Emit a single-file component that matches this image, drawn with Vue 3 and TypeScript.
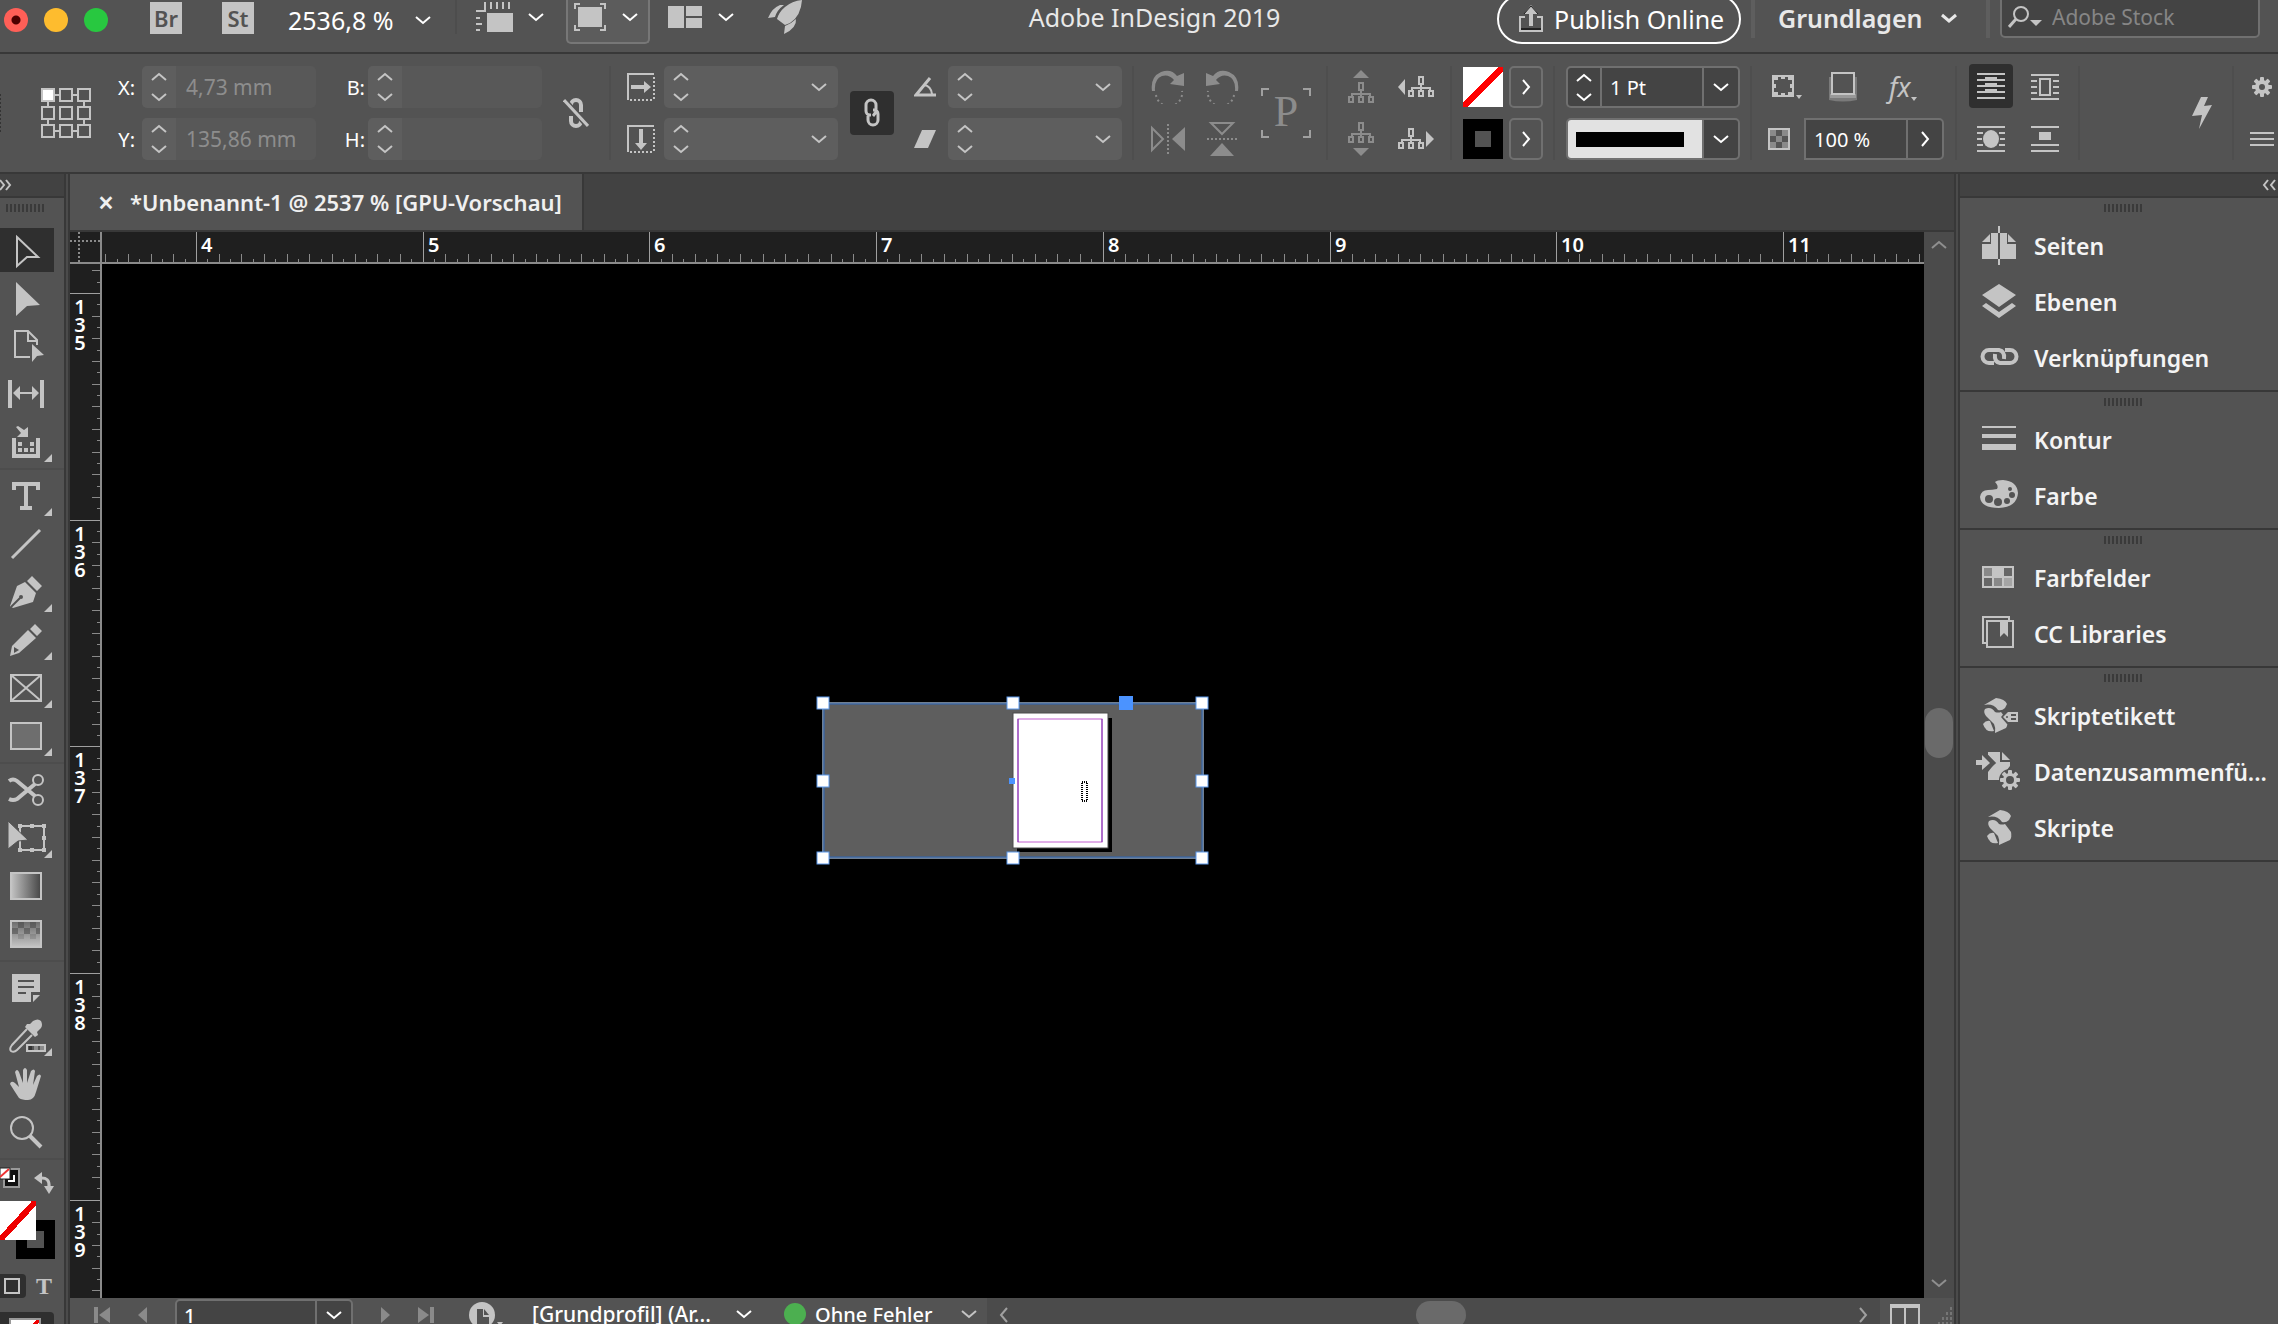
<script setup lang="ts">
import { h, ref } from 'vue'

type Glyph = [number, number, string]

const BG = '#535353'
const treeUp =
  '<g fill="none" stroke="currentColor" stroke-width="2"><rect x="11" y="1" width="4" height="7"/><path d="M13 8v7M4 15v-3h18v3"/><rect x="1" y="15" width="4" height="5"/><rect x="11" y="15" width="4" height="5"/><rect x="21" y="15" width="4" height="5"/></g>'
const scroll = (dx: number): string =>
  `<g transform="translate(${dx} 0)"><path d="M18 17 30 10q9 1 11 6l-2 4q-3 3-7 2-5-7-14-5z"/><path d="M19 21q6-3 10 3 3 1 6 0l6 8q1 5-1 8l-11 5q1-5-1-9l-8-8q-3-4-1-7z"/><path d="M17 36q3-4 7-3l4 10q-8 2-11-7z"/></g>`
const gear = (cx: number, cy: number, r: number, hole: number, bg: string): string => {
  let s = ''
  for (let a = 0; a < 180; a += 45) {
    s += `<rect x="${cx - 2}" y="${cy - r}" width="4" height="${r * 2}" rx="1" transform="rotate(${a} ${cx} ${cy})"/>`
  }
  return s + `<circle cx="${cx}" cy="${cy}" r="${r - 3}"/><circle cx="${cx}" cy="${cy}" r="${hole}" fill="${bg}"/>`
}
const corner = '<path d="M52 36v8h-8z"/>'

const glyphs: Record<string, Glyph> = {
  down: [16, 10, '<path d="M1 2l7 6 7-6" fill="none" stroke="currentColor" stroke-width="2"/>'],
  up: [16, 10, '<path d="M1 8l7-6 7 6" fill="none" stroke="currentColor" stroke-width="2"/>'],
  downBold: [16, 10, '<path d="M1 2l7 6 7-6" fill="none" stroke="currentColor" stroke-width="3"/>'],
  right: [10, 16, '<path d="M2 1l6 7-6 7" fill="none" stroke="currentColor" stroke-width="2"/>'],
  left: [10, 16, '<path d="M8 1l-6 7 6 7" fill="none" stroke="currentColor" stroke-width="2"/>'],
  expand: [12, 12, '<path d="M0 1l4 5-4 5M6 1l4 5-4 5" fill="none" stroke="currentColor" stroke-width="2"/>'],
  collapse: [14, 12, '<path d="M6 1L2 6l4 5M13 1L9 6l4 5" fill="none" stroke="currentColor" stroke-width="2"/>'],
  viewOptions: [38, 30, '<rect x="11" y="11" width="26" height="19"/><path d="M9 0v9H0M15 0v7M21 0v7M27 0v7M33 0v7M0 16h4M0 22h6M0 28h4" fill="none" stroke="currentColor" stroke-width="2"/>'],
  screenMode: [32, 28, '<rect x="4" y="4" width="24" height="20"/><path d="M1 6V1h5M26 1h5v5M31 22v5h-5M6 27H1v-5" fill="none" stroke="currentColor" stroke-width="2"/>'],
  arrange: [34, 22, '<path d="M0 0h16v22H0zM18 0h16v10H18zM18 12h16v10H18z"/>'],
  rocket: [34, 34, '<path d="M34 0q-1 16-12 23l-5 2-8-6q2-7 8-12 7-6 17-7zM12 5Q4 8 0 18l7-1q2-7 9-12zM28 19q1 9-12 15l1-8q6-2 11-7z"/>'],
  share: [24, 28, '<path d="M6 12H1v14h22V12h-5" fill="none" stroke="currentColor" stroke-width="2"/><path d="M2 23h20v2H2z" fill="#222"/><path d="M12 0l7 9h-5v12h-4V9H5z"/><path d="M5 9l7-8 7 8" fill="none" stroke="#222"/>'],
  search: [36, 24, '<circle cx="13" cy="9" r="7" fill="none" stroke="currentColor" stroke-width="2"/><path d="M8 14l-7 8" stroke="currentColor" stroke-width="3"/><path d="M22 15h12l-6 6z"/>'],
  brokenLink: [26, 30, '<path d="M8 12V7a5 5 0 0 1 10 0v7M8 18v5a5 5 0 0 0 10 0v-2" fill="none" stroke="currentColor" stroke-width="4"/><path d="M1 2l24 26" stroke="#535353" stroke-width="6"/><path d="M1 2l24 26" stroke="currentColor" stroke-width="3"/>'],
  linked: [16, 30, '<path d="M7 17H6a4 4 0 0 1-4-4V7a5 5 0 0 1 10 0v5q0 3-3 6M9 12h1a4 4 0 0 1 4 4v6a5 5 0 0 1-10 0v-4" fill="none" stroke="currentColor" stroke-width="3"/>'],
  scaleX: [28, 28, '<path d="M27 1H1v26" fill="none" stroke="currentColor" stroke-width="2"/><path d="M27 4v22M3 27h24" fill="none" stroke="currentColor" stroke-width="2" stroke-dasharray="2 2"/><path d="M4 12h13V8l7 6-7 6v-4H4z"/>'],
  scaleY: [28, 28, '<path d="M27 1H1v26" fill="none" stroke="currentColor" stroke-width="2"/><path d="M27 4v22M3 27h24" fill="none" stroke="currentColor" stroke-width="2" stroke-dasharray="2 2"/><path d="M12 4v14H8l6 7 6-7h-4V4z"/>'],
  angle: [22, 20, '<path d="M16 1L2 18h20" fill="none" stroke="currentColor" stroke-width="3"/><path d="M10 8q7 1 8 9" fill="none" stroke="currentColor" stroke-width="2"/>'],
  shear: [22, 18, '<path d="M8 0h14l-8 18H0z"/>'],
  rotateCw: [34, 34, '<path d="M1 21Q-1 7 10 2q10-4 16 4l7-3v13l-14-2 4-4Q18 4 11 6 3 9 4 21z"/><path d="M5 25A13 13 0 0 0 31 21" fill="none" stroke="currentColor" stroke-width="2" stroke-dasharray="2 3"/>'],
  rotateCcw: [34, 34, '<path d="M33 21Q35 7 24 2 14-2 8 6L1 3v13l14-2-4-4q5-6 12-4 8 3 7 15z"/><path d="M29 25A13 13 0 0 1 3 21" fill="none" stroke="currentColor" stroke-width="2" stroke-dasharray="2 3"/>'],
  flipH: [34, 30, '<path d="M1 4v22l11-11z" fill="none" stroke="currentColor" stroke-width="2"/><path d="M34 3v24L21 15z"/><path d="M17 0v30" stroke="currentColor" stroke-width="2" stroke-dasharray="2 2"/>'],
  flipV: [30, 34, '<path d="M4 1h22L15 12z" fill="none" stroke="currentColor" stroke-width="2"/><path d="M3 34h24L15 21z"/><path d="M0 17h30" stroke="currentColor" stroke-width="2" stroke-dasharray="2 2"/>'],
  parent: [26, 34, '<path d="M5 8l8-8 8 8z"/><g transform="translate(0 12)">' + treeUp + '</g>'],
  child: [26, 34, treeUp + '<path d="M5 26h16l-8 8z"/>'],
  previous: [36, 22, '<path d="M7 3v16L0 11z"/><g transform="translate(10 0)">' + treeUp + '</g>'],
  next: [36, 22, treeUp + '<path d="M28 3v16l8-8z"/>'],
  cornerShape: [30, 24, '<rect x="1" y="1" width="20" height="20" fill="none" stroke="currentColor" stroke-width="2"/><path d="M2 2h4v3H2zM16 2h4v3h-4zM2 17h4v3H2zM16 17h4v3h-4zM9 2h4v2H9zM9 18h4v2H9zM2 9h2v4H2zM18 9h2v4h-2z"/><path d="M24 20h6l-3 4z"/>'],
  shadow: [28, 30, '<path d="M0 5h28v23q-14 3-28 0z" fill="#7a7a7a"/><path d="M1 22h26v4H1z" fill="#999"/><rect x="3" y="1" width="22" height="21" fill="#535353" stroke="currentColor" stroke-width="2"/>'],
  opacity: [22, 22, '<rect x="1" y="1" width="20" height="20" fill="#555" stroke="currentColor" stroke-width="2"/><path d="M2 2h6v6H2zM14 2h6v6h-6zM8 8h6v6H8zM2 14h6v6H2zM14 14h6v6h-6z" fill="#8a8a8a"/>'],
  wrapNone: [28, 26, '<path d="M0 0h28v2H0zM0 24h28v2H0zM0 6h28v2H0zM0 12h28v2H0zM0 18h28v2H0z"/><path d="M8 4h12v4H8zM8 10h12v4H8zM8 16h12v4H8z"/>'],
  wrapBox: [28, 26, '<path d="M0 0h28v2H0zM0 24h28v2H0zM0 6h6v2H0zM0 12h6v2H0zM0 18h6v2H0zM22 6h6v2h-6zM22 12h6v2h-6zM22 18h6v2h-6z"/><rect x="9" y="5" width="10" height="16" fill="none" stroke="currentColor" stroke-width="2"/>'],
  wrapShape: [28, 26, '<path d="M0 0h28v2H0zM0 24h28v2H0zM0 6h6v2H0zM0 12h5v2H0zM0 18h6v2H0zM22 6h6v2h-6zM23 12h5v2h-5zM22 18h6v2h-6z"/><ellipse cx="14" cy="13" rx="8" ry="9"/>'],
  wrapJump: [28, 26, '<path d="M0 0h28v2H0zM0 18h28v2H0zM0 24h28v2H0zM8 6h12v8H8z"/>'],
  bolt: [20, 32, '<path d="M9 0h7l-4 9 8-1L7 32l3-14-10 1z"/>'],
  gear: [20, 20, gear(10, 10, 10, 3, BG)],
  menu: [24, 14, '<path d="M0 0h24v2H0zM0 6h24v2H0zM0 12h24v2H0z"/>'],

  select: [56, 48, '<path d="M17 11l21 20H27L17 40z" fill="none" stroke="currentColor" stroke-width="2"/>'],
  direct: [56, 48, '<path d="M16 8l24 23-13 1-11 10z"/>'],
  page: [56, 48, '<path d="M30 35H15V9h13l9 9v5M28 9v10h9" fill="none" stroke="currentColor" stroke-width="2"/><path d="M32 22l12 11-7 1-5 6z"/>'],
  gap: [56, 48, '<path d="M8 10h4v28H8zM40 10h4v28h-4z"/><path d="M13 23l7-7v6h12v-6l7 7-7 7v-6H20v6z"/>'],
  collector: [56, 48, '<path d="M14 20v18h24V20" fill="none" stroke="currentColor" stroke-width="4"/><path d="M18 24h4v4h-4zM30 24h4v4h-4zM18 30h4v4h-4zM24 30h4v4h-4zM30 30h4v4h-4zM28 9v10H17l4-4-5-6 2-1 6 4z"/>' + corner],
  type: [56, 48, '<path d="M12 10h28v8h-4v-4h-8v20h4v4H20v-4h4V14h-8v4h-4z"/>' + corner],
  line: [56, 48, '<path d="M12 38L40 10" stroke="currentColor" stroke-width="3"/>'],
  pen: [56, 48, '<path d="M32 8l10 10-5 5-10-10zM25 14l11 11-3 9-20 6-3-2 7-20z"/><path d="M11 39l9-9" stroke="#535353" stroke-width="2"/><circle cx="21" cy="29" r="2" fill="#535353"/>' + corner],
  pencil: [56, 48, '<path d="M35 8l7 7-5 5-7-7zM28 14l8 8-17 15-9 3 2-10z"/><path d="M14 31l5 3-5 3z" fill="#535353"/>' + corner],
  frame: [56, 48, '<path d="M11 11h30v26H11zl30 26M41 11L11 37" fill="none" stroke="currentColor" stroke-width="2"/>' + corner],
  rect: [56, 48, '<path d="M11 11h30v26H11z" fill="#6e6e6e" stroke="currentColor" stroke-width="2"/>' + corner],
  scissors: [56, 48, '<path d="M9 15q4-3 8 0l18 15M9 33q4 2 8 0l18-15" fill="none" stroke="currentColor" stroke-width="4"/><circle cx="38" cy="14" r="5" fill="none" stroke="currentColor" stroke-width="2"/><circle cx="38" cy="34" r="5" fill="none" stroke="currentColor" stroke-width="2"/>'],
  transform: [56, 48, '<rect x="20" y="12" width="24" height="24" fill="none" stroke="currentColor" stroke-width="2"/><path d="M18 10h4v4h-4zM30 10h4v4h-4zM42 10h4v4h-4zM42 22h4v4h-4zM18 34h4v4h-4zM30 34h4v4h-4zM42 34h4v4h-4z"/><path d="M8 7l20 19-10 1-10 8z" stroke="#535353"/>' + corner],
  gradient: [56, 48, '<defs><linearGradient id="g1"><stop stop-color="#c4c4c4"/><stop offset="1" stop-color="#454545"/></linearGradient></defs><path d="M11 11h30v26H11z" fill="url(#g1)" stroke="currentColor" stroke-width="2"/>'],
  feather: [56, 48, '<defs><linearGradient id="g2" x2="0" y2="1"><stop stop-color="#6a6a6a"/><stop offset="1" stop-color="#c4c4c4"/></linearGradient></defs><path d="M11 11h30v26H11z" fill="url(#g2)" stroke="currentColor" stroke-width="2"/><path d="M18 12h6v6h-6zM30 12h6v6h-6zM12 18h6v6h-6zM24 18h6v6h-6zM36 18h4v6h-4z" fill="#444" opacity=".5"/><path d="M18 24h6v5h-6zM30 24h6v5h-6z" fill="#444" opacity=".2"/>'],
  note: [56, 48, '<path d="M12 10h28v18h-9v10H12zM33 31h7l-7 7z"/><path d="M18 17h16M18 23h16M18 29h8" stroke="#535353" stroke-width="2"/>'],
  dropper: [56, 48, '<path d="M30 12l3-3q5-3 8 0 2 4 0 7l-4 4 1 3-3 2-10-10 2-3z"/><path d="M27 17L12 33q-3 4-1 6 3 2 6-1l15-15" fill="none" stroke="currentColor" stroke-width="2"/><rect x="27" y="33" width="18" height="6" fill="#535353" stroke="currentColor" stroke-width="2"/><path d="M29 34h3v4h-3z" fill="#333"/><path d="M34 34h4v4h-4zM40 34h4v4h-4z" fill="#8a8a8a"/>' + corner],
  hand: [56, 48, '<path d="M19 38q-4-6-9-14 1-4 5-1l4 4-4-15q2-4 4 0l4 11V10q2-4 4 0v13l4-12q3-3 4 0l-2 14 4-9q3-3 4 0l-5 16q-2 8-8 8-6 0-9-2z"/>'],
  zoom: [56, 48, '<circle cx="22" cy="20" r="11" fill="none" stroke="currentColor" stroke-width="2"/><path d="M30 28l11 11" stroke="currentColor" stroke-width="4"/>'],
  defaults: [20, 24, '<path d="M4 4h15v18H4z" fill="#111" stroke="#999" stroke-width="2"/><path d="M8 16h6v-6" stroke="#fff" stroke-width="2" fill="none"/><path d="M0 3h10v11H0z" fill="#fff" stroke="#222" stroke-width="1"/><path d="M0 12l9-8" stroke="#e33" stroke-width="2"/>'],
  swap: [20, 22, '<path d="M6 6q10-1 9 9" fill="none" stroke="currentColor" stroke-width="3"/><path d="M0 6l8-6v12zM10 14h10l-5 8z"/>'],

  seiten: [64, 56, '<path d="M12 26h34v15H12zM21 15h7v12h-7zM30 15h7v12h-7zM12 24l8-8v8zM46 24l-8-8v8z"/><path d="M29 8v38" stroke="#535353" stroke-width="2"/><path d="M28 8h2v7h-2zM28 41h2v6h-2z"/>'],
  ebenen: [64, 56, '<path d="M29 10l17 11-17 12-17-12zM12 32l4-3 13 9 13-9 4 3-17 12z"/>'],
  links: [64, 56, '<path d="M24 33h-5a6 6 0 0 1 0-13h10q6 1 5 9M35 20h5a6 6 0 0 1 0 13H30q-6-1-5-9" fill="none" stroke="currentColor" stroke-width="4"/>'],
  kontur: [64, 56, '<path d="M12 14h34v2H12zM12 22h34v4H12zM12 32h34v6H12z"/>'],
  farbe: [64, 56, '<path d="M25 14q2-2 8-2 14 1 15 13-1 14-19 15-18 0-19-11 1-7 8-7 4 0 9-1 2-3-2-7z"/><g fill="#535353"><circle cx="19" cy="31" r="4"/><circle cx="28" cy="34" r="4"/><circle cx="37" cy="33" r="3"/><circle cx="42" cy="27" r="3"/><circle cx="40" cy="21" r="2"/></g>'],
  farbfelder: [64, 56, '<path d="M12 16h32v22H12z"/><path d="M14 18h8v8h-8z" fill="#888"/><path d="M34 18h8v8h-8zM14 28h8v8h-8z" fill="#666"/><path d="M24 28h8v8h-8z" fill="#888"/><path d="M34 28h8v8h-8z" fill="#a5a5a5"/>'],
  libraries: [64, 56, '<path d="M16 37h-3V11h26v3" fill="none" stroke="currentColor" stroke-width="2"/><rect x="17" y="15" width="26" height="26" fill="none" stroke="currentColor" stroke-width="2"/><path d="M30 15h8v16l-4-4-4 4z"/>'],
  etikett: [64, 56, scroll(-4) + '<path d="M31 29l6-7h13v14H37z" fill="#535353"/><path d="M33 29l5-5h10v10H38z"/><path d="M41 27h5M41 31h5" stroke="#535353" stroke-width="2"/><circle cx="37" cy="29" r="1" fill="#535353"/>'],
  daten: [64, 56, '<path d="M18 8h12v10h10v4L29 36H18v-8l7-9-7-8zM32 8l8 8h-8z"/><path d="M14 9l10 10-10 9" fill="none" stroke="#535353" stroke-width="3"/><path d="M6 16h6v-5l8 8-8 7v-5H6z"/><circle cx="40" cy="36" r="11" fill="#535353"/>' + gear(40, 36, 10, 4, BG)],
  skripte: [64, 56, scroll(0)],

  first: [16, 16, '<path d="M0 0h4v16H0zM16 0v16L5 8z"/>'],
  prev: [9, 16, '<path d="M9 0v16L0 8z"/>'],
  nextPage: [9, 16, '<path d="M0 0v16l9-8z"/>'],
  last: [16, 16, '<path d="M16 0h-4v16h4zM0 0v16l11-8z"/>'],
  preflight: [36, 26, '<circle cx="13" cy="13" r="13"/><path d="M8 7h6v8h6v11H8z" fill="#535353"/><path d="M15 7l5 6h-5z" fill="#535353"/><path d="M28 20h6l-3 4z"/>'],
  split: [30, 24, '<path d="M0 0h30v24h-2V4H16v20h-2V4H2v20H0z"/>'],
  sizer: [16, 18, '<path d="M14 0h2v3h-2zM14 5h2v3h-2zM10 5h2v3h-2zM14 10h2v3h-2zM10 10h2v3h-2zM6 10h2v3H6zM14 15h2v3h-2zM10 15h2v3h-2zM6 15h2v3H6zM2 15h2v3H2z"/>'],
}

const Ic = (props: { n: string }) => {
  const [w, hh, body] = glyphs[props.n]
  return h('svg', {
    width: w,
    height: hh,
    viewBox: `0 0 ${w} ${hh}`,
    fill: 'currentColor',
    'aria-hidden': 'true',
    innerHTML: body,
  })
}
Ic.props = ['n']

const toolGroups: string[][] = [
  ['select', 'direct', 'page', 'gap', 'collector'],
  ['type', 'line', 'pen', 'pencil', 'frame', 'rect'],
  ['scissors', 'transform', 'gradient', 'feather'],
  ['note', 'dropper', 'hand', 'zoom'],
]
const activeTool = ref('select')

const panels: { icon: string; label: string }[][] = [
  [
    { icon: 'seiten', label: 'Seiten' },
    { icon: 'ebenen', label: 'Ebenen' },
    { icon: 'links', label: 'Verknüpfungen' },
  ],
  [
    { icon: 'kontur', label: 'Kontur' },
    { icon: 'farbe', label: 'Farbe' },
  ],
  [
    { icon: 'farbfelder', label: 'Farbfelder' },
    { icon: 'libraries', label: 'CC Libraries' },
  ],
  [
    { icon: 'etikett', label: 'Skriptetikett' },
    { icon: 'daten', label: 'Datenzusammenfü...' },
    { icon: 'skripte', label: 'Skripte' },
  ],
]

const UNIT = 226.7
function ticks(origin: number, from: number, to: number) {
  const out: { p: number; len: number }[] = []
  for (let i = -20; i < 180; i++) {
    const p = Math.round(origin + (i * UNIT) / 20)
    if (i % 20 !== 0 && p >= from && p < to) out.push({ p, len: i % 2 === 0 ? 8 : 3 })
  }
  return out
}
const hTicks = ticks(94, 0, 1822)
const hMajors = [4, 5, 6, 7, 8, 9, 10, 11].map((n, i) => ({ n, p: Math.round(94 + i * UNIT) }))
const vTicks = ticks(29, 0, 1032)
const vMajors = [135, 136, 137, 138, 139].map((n, i) => ({
  digits: String(n).split(''),
  p: Math.round(29 + i * UNIT),
}))

const handles: [number, number][] = [
  [7, 9], [197, 9], [386, 9], [7, 87], [386, 87], [7, 164], [197, 164], [386, 164],
]
</script>

<template>
  <div class="app">
    <header class="topbar">
      <div class="lights">
        <button class="light close" aria-label="Schließen"></button>
        <button class="light min" aria-label="Minimieren"></button>
        <button class="light max" aria-label="Maximieren"></button>
      </div>
      <button class="badge br">Br</button>
      <button class="badge st">St</button>
      <button class="zoomlevel"><span>2536,8 %</span><Ic n="down" /></button>
      <i class="tsep"></i>
      <button class="tbtn viewopts" aria-label="Anzeigeoptionen"><Ic n="viewOptions" class="soft" /><Ic n="down" /></button>
      <button class="tbtn mode" aria-label="Bildschirmmodus"><Ic n="screenMode" class="soft" /><Ic n="down" /></button>
      <button class="tbtn arr" aria-label="Dokumente anordnen"><Ic n="arrange" class="soft" /><Ic n="down" /></button>
      <button class="tbtn rocket" aria-label="GPU"><Ic n="rocket" class="soft" /></button>
      <h1 class="title">Adobe InDesign 2019</h1>
      <button class="publish"><Ic n="share" class="soft" />Publish Online</button>
      <i class="bigsep"></i>
      <button class="workspace">Grundlagen<Ic n="downBold" /></button>
      <i class="bigsep"></i>
      <label class="stock"><Ic n="search" class="soft" /><input type="text" placeholder="Adobe Stock" aria-label="Adobe Stock" /></label>
    </header>

    <section class="control">
      <i class="edge"></i>
      <div class="refpoint">
        <button v-for="n in 9" :key="n" :class="{ on: n === 1 }" :aria-label="'Bezugspunkt ' + n"></button>
      </div>
      <div class="col xy">
        <div v-for="f in [['X', '4,73 mm'], ['Y', '135,86 mm']]" :key="f[0]" class="row">
          <label :for="'f' + f[0]">{{ f[0] }}:</label>
          <div class="field off">
            <span class="step"><button aria-label="Mehr"><Ic n="up" /></button><button aria-label="Weniger"><Ic n="down" /></button></span>
            <input :id="'f' + f[0]" type="text" :value="f[1]" disabled />
          </div>
        </div>
      </div>
      <div class="col bh">
        <div v-for="f in ['B', 'H']" :key="f" class="row">
          <label :for="'f' + f">{{ f }}:</label>
          <div class="field off">
            <span class="step"><button aria-label="Mehr"><Ic n="up" /></button><button aria-label="Weniger"><Ic n="down" /></button></span>
            <input :id="'f' + f" type="text" disabled />
          </div>
        </div>
      </div>
      <button class="bare chain" aria-label="Proportionen"><Ic n="brokenLink" /></button>
      <i class="sep s1"></i>
      <div class="col scale">
        <div v-for="f in ['scaleX', 'scaleY']" :key="f" class="row">
          <Ic :n="f" />
          <div class="field combo">
            <span class="step"><button aria-label="Mehr"><Ic n="up" /></button><button aria-label="Weniger"><Ic n="down" /></button></span>
            <input type="text" :aria-label="f" /><button class="drop" aria-label="Auswahl"><Ic n="down" /></button>
          </div>
        </div>
      </div>
      <button class="linkbtn" aria-label="Verknüpft"><Ic n="linked" /></button>
      <div class="col skew">
        <div v-for="f in ['angle', 'shear']" :key="f" class="row">
          <Ic :n="f" />
          <div class="field combo">
            <span class="step"><button aria-label="Mehr"><Ic n="up" /></button><button aria-label="Weniger"><Ic n="down" /></button></span>
            <input type="text" :aria-label="f" /><button class="drop" aria-label="Auswahl"><Ic n="down" /></button>
          </div>
        </div>
      </div>
      <i class="sep s2"></i>
      <div class="icons rot">
        <button v-for="n in ['rotateCw', 'rotateCcw', 'flipH', 'flipV']" :key="n" :aria-label="n"><Ic :n="n" /></button>
      </div>
      <div class="pbox"><i></i><i></i><i></i><i></i><span>P</span></div>
      <i class="sep s3"></i>
      <div class="icons trees">
        <button class="dim" aria-label="Container"><Ic n="parent" /></button>
        <button aria-label="Vorheriges"><Ic n="previous" /></button>
        <button class="dim" aria-label="Inhalt"><Ic n="child" /></button>
        <button aria-label="Nächstes"><Ic n="next" /></button>
      </div>
      <i class="sep s4"></i>
      <div class="col paint">
        <div class="row"><span class="swatch none"></span><button class="open" aria-label="Fläche"><Ic n="right" /></button></div>
        <div class="row"><span class="swatch black"></span><button class="open" aria-label="Kontur"><Ic n="right" /></button></div>
      </div>
      <i class="sep s5"></i>
      <div class="col stroke">
        <div class="field live">
          <span class="step"><button aria-label="Mehr"><Ic n="up" /></button><button aria-label="Weniger"><Ic n="down" /></button></span>
          <input type="text" value="1 Pt" aria-label="Konturstärke" /><button class="drop" aria-label="Auswahl"><Ic n="down" /></button>
        </div>
        <div class="field live">
          <span class="sample"><i></i></span><button class="drop" aria-label="Konturart"><Ic n="down" /></button>
        </div>
      </div>
      <i class="sep s6"></i>
      <div class="col fx">
        <div class="row trio">
          <button class="bare" aria-label="Ecken"><Ic n="cornerShape" /></button>
          <button class="bare" aria-label="Schatten"><Ic n="shadow" /></button>
          <button class="bare fxt" aria-label="Effekte"><em>fx</em><i></i></button>
        </div>
        <div class="row opa">
          <Ic n="opacity" />
          <div class="field live pct"><input type="text" value="100 %" aria-label="Deckkraft" /><button class="drop" aria-label="Regler"><Ic n="right" /></button></div>
        </div>
      </div>
      <i class="sep s7"></i>
      <div class="icons wrap">
        <button class="on" aria-label="Kein Umfließen"><Ic n="wrapNone" /></button>
        <button aria-label="Rahmen umfließen"><Ic n="wrapBox" /></button>
        <button aria-label="Form umfließen"><Ic n="wrapShape" /></button>
        <button aria-label="Objekt überspringen"><Ic n="wrapJump" /></button>
      </div>
      <i class="sep s7"></i>
      <button class="bare bolt" aria-label="Schnellanwendung"><Ic n="bolt" /></button>
      <i class="sep s8"></i>
      <div class="icons end">
        <button aria-label="Einstellungen"><Ic n="gear" /></button>
        <button aria-label="Menü"><Ic n="menu" /></button>
      </div>
    </section>

    <main class="body">
      <aside class="tools">
        <div class="dockhead"><Ic n="expand" /></div>
        <div class="grip"></div>
        <div v-for="(g, gi) in toolGroups" :key="gi" class="tgroup">
          <button v-for="t in g" :key="t" :class="['tool', { on: t === activeTool }]" :aria-label="t" @click="activeTool = t">
            <Ic :n="t" />
          </button>
        </div>
        <div class="swaprow"><Ic n="defaults" /><Ic n="swap" /></div>
        <div class="fillstroke"><span class="strokebox"></span><span class="fillbox"></span></div>
        <div class="format"><button class="on" aria-label="Container"><i></i></button><button class="t">T</button></div>
        <div class="applybox"><span></span></div>
      </aside>
      <i class="gutter"></i>

      <section class="doc">
        <nav class="tabs">
          <div class="tab"><button class="x" aria-label="Schließen">×</button><span>*Unbenannt-1 @ 2537 % [GPU-Vorschau]</span></div>
        </nav>
        <div class="work">
          <div class="sheet">
            <div class="hrow">
              <div class="origin"></div>
              <svg class="hruler" height="30">
                <rect v-for="t in hTicks" :key="t.p" :x="t.p" :y="30 - t.len" width="1" :height="t.len" fill="#8a8a8a" />
                <template v-for="m in hMajors" :key="m.n">
                  <rect :x="m.p" y="0" width="1" height="30" fill="#a0a0a0" />
                  <text :x="m.p + 5" y="20">{{ m.n }}</text>
                </template>
              </svg>
            </div>
            <div class="vrow">
              <svg class="vruler" width="30">
                <rect v-for="t in vTicks" :key="t.p" :x="30 - t.len" :y="t.p" :width="t.len" height="1" fill="#8a8a8a" />
                <template v-for="m in vMajors" :key="m.p">
                  <rect x="0" :y="m.p" width="30" height="1" fill="#a0a0a0" />
                  <text v-for="(d, di) in m.digits" :key="di" x="10" text-anchor="middle" :y="m.p + 21 + di * 18">{{ d }}</text>
                </template>
              </svg>
              <div class="canvas">
                <svg class="art" width="396" height="172">
                  <rect x="7" y="9" width="380" height="155" fill="#5e5e5e" stroke="#6f7f92" stroke-width="2" />
                  <rect x="8" y="10" width="378" height="153" fill="none" stroke="#2f66b5" />
                  <rect x="201" y="24" width="95" height="134" fill="#000" />
                  <rect x="197" y="19" width="95" height="135" fill="#fff" stroke="#4a4a4a" />
                  <rect x="202" y="25" width="84" height="123" fill="none" stroke="#c25fd0" />
                  <path d="M202 25v123M286 25v123" stroke="#7d2fae" />
                  <rect x="193" y="84" width="6" height="6" fill="#4b93ff" />
                  <rect x="266" y="88" width="5" height="19" fill="none" stroke="#000" stroke-width="2" stroke-dasharray="1 1" />
                  <rect v-for="(p, i) in handles" :key="i" :x="p[0] - 6" :y="p[1] - 6" width="12" height="12" fill="#fff" stroke="#5b97ea" />
                  <rect x="303" y="2" width="14" height="14" fill="#4b93ff" />
                </svg>
              </div>
            </div>
          </div>
          <div class="vscroll"><Ic n="up" /><i></i><Ic n="down" /></div>
        </div>
        <footer class="status">
          <div class="pager">
            <Ic n="first" /><Ic n="prev" class="p1" />
            <div class="pagebox"><input type="text" value="1" aria-label="Seite" /><button aria-label="Seiten"><Ic n="down" /></button></div>
            <Ic n="nextPage" class="p2" /><Ic n="last" class="p3" />
          </div>
          <Ic n="preflight" class="soft pf" />
          <button class="profile"><span>[Grundprofil] (Ar...</span><Ic n="down" /></button>
          <button class="errors"><i></i><span>Ohne Fehler</span><Ic n="down" class="soft" /></button>
          <div class="hscroll"><Ic n="left" /><i></i><Ic n="right" /></div>
          <Ic n="split" class="soft sp" />
          <Ic n="sizer" class="sz" />
        </footer>
      </section>
      <i class="gutter"></i>

      <aside class="dock">
        <div class="dockhead right"><Ic n="collapse" /></div>
        <div v-for="(g, gi) in panels" :key="gi" class="pgroup">
          <div class="grip"></div>
          <button v-for="p in g" :key="p.label" class="panel"><Ic :n="p.icon" /><span>{{ p.label }}</span></button>
        </div>
      </aside>
    </main>
  </div>
</template>

<style>
html,
body,
#app {
  height: 100%;
  overflow: hidden;
}
</style>

<style scoped>
* {
  box-sizing: border-box;
}
.app {
  height: 100vh;
  display: flex;
  flex-direction: column;
  background: #535353;
  color: #fff;
  font-family: 'Noto Sans', 'Open Sans', sans-serif;
  font-size: 20px;
  overflow: hidden;
}
button {
  padding: 0;
  border: 0;
  background: none;
  color: inherit;
  font: inherit;
  display: flex;
  align-items: center;
  flex: none;
}
input {
  border: 0;
  padding: 0;
  min-width: 0;
  background: none;
  color: inherit;
  font: inherit;
  outline: none;
}
svg {
  display: block;
  flex: none;
}
i {
  display: block;
  flex: none;
}
.soft {
  color: #c4c4c4;
}

.topbar {
  flex: 0 0 54px;
  height: 54px;
  display: flex;
  align-items: flex-start;
  border-bottom: 2px solid #383838;
  overflow: hidden;
}
.lights {
  display: flex;
  gap: 16px;
  padding: 8px 0 0 4px;
}
.light {
  width: 24px;
  height: 24px;
  border-radius: 50%;
  justify-content: center;
}
.close {
  background: radial-gradient(circle, #4d0000 4px, #ff5f57 5px);
}
.min {
  background: #febc2e;
}
.max {
  background: #28c840;
}
.badge {
  width: 32px;
  height: 32px;
  margin: 2px 0 0 40px;
  background: #c4c4c4;
  color: #535353;
  font-weight: 600;
  font-size: 22px;
  justify-content: center;
}
.br {
  margin-left: 42px;
}
.zoomlevel {
  margin-left: 34px;
  height: 40px;
  font-size: 25px;
  width: 143px;
  justify-content: space-between;
  white-space: nowrap;
}
.tsep {
  width: 2px;
  height: 34px;
  margin-left: 24px;
  background: #4d4d4d;
}
.tbtn {
  height: 34px;
}
.viewopts {
  margin-left: 19px;
  gap: 14px;
}
.mode {
  margin-left: 22px;
  width: 84px;
  height: 44px;
  padding: 0 10px 8px 6px;
  justify-content: space-between;
  background: #5c5c5c;
  border: 2px solid #777;
  border-top: 0;
  border-radius: 0 0 5px 5px;
}
.arr {
  margin-left: 18px;
  gap: 16px;
}
.rocket {
  margin-left: 34px;
}
.title {
  margin: 0 auto;
  padding-left: 10px;
  font-size: 25px;
  font-weight: 400;
  line-height: 34px;
  color: #e8e8e8;
}
.publish {
  height: 50px;
  width: 244px;
  margin-top: -6px;
  border: 2px solid #fff;
  border-radius: 25px;
  padding-left: 20px;
  gap: 11px;
  font-size: 25px;
  white-space: nowrap;
}
.bigsep {
  width: 4px;
  height: 38px;
  margin-left: 10px;
  background: #5e5e5e;
}
.workspace {
  margin-left: 23px;
  width: 179px;
  height: 35px;
  justify-content: space-between;
  font-size: 25px;
  font-weight: 600;
  color: #e8e8e8;
}
.workspace + .bigsep {
  margin-left: 29px;
}
.stock {
  width: 260px;
  height: 42px;
  margin: -4px 18px 0 10px;
  border: 2px solid #707070;
  border-radius: 5px;
  background: #444;
  display: flex;
  align-items: center;
  padding-left: 6px;
  gap: 8px;
  font-size: 21px;
}
.stock input {
  flex: 1;
}
.stock input::placeholder {
  color: #868686;
  opacity: 1;
}

.control {
  flex: 0 0 120px;
  height: 120px;
  display: flex;
  align-items: center;
  border-bottom: 2px solid #383838;
  color: #c4c4c4;
}
.edge {
  width: 1px;
  height: 38px;
  background: repeating-linear-gradient(#333 0 2px, transparent 2px 4px);
}
.refpoint {
  margin-left: 40px;
  display: grid;
  grid-template-columns: repeat(3, 14px);
  gap: 4px;
  background:
    linear-gradient(#c4c4c4 0 0) 50% 6px / 40px 2px no-repeat,
    linear-gradient(#c4c4c4 0 0) 50% 42px / 40px 2px no-repeat,
    linear-gradient(#c4c4c4 0 0) 6px 50% / 2px 40px no-repeat,
    linear-gradient(#c4c4c4 0 0) 42px 50% / 2px 40px no-repeat;
}
.refpoint button {
  width: 14px;
  height: 14px;
  border: 2px solid #c4c4c4;
  background: #535353;
}
.refpoint .on {
  background: #fff;
}
.col {
  display: flex;
  flex-direction: column;
  gap: 10px;
  flex: none;
}
.row {
  display: flex;
  align-items: center;
  height: 42px;
}
.row label {
  width: 27px;
  color: #fff;
  text-align: right;
  padding-right: 7px;
}
.xy {
  margin-left: 24px;
}
.bh {
  margin-left: 20px;
}
.bh label {
  width: 32px;
  padding-right: 3px;
}
.field {
  width: 174px;
  height: 42px;
  border-radius: 5px;
  display: flex;
  align-items: stretch;
  overflow: hidden;
  background: #5e5e5e;
}
.field input {
  flex: 1;
  width: 0;
  padding-left: 10px;
}
.off {
  background: #585858;
  color: #8d8d8d;
  font-size: 21px;
}
.off .step {
  background: #5e5e5e;
}
.step {
  width: 34px;
  flex: none;
  display: flex;
  flex-direction: column;
  align-items: center;
  color: #c4c4c4;
  padding: 1px 0;
}
.step button {
  flex: 1;
}
.drop {
  width: 38px;
  justify-content: center;
}
.live {
  background: #444;
  border: 2px solid #707070;
  color: #fff;
}
.live .step {
  color: #fff;
  border-right: 2px solid #707070;
  padding: 0;
}
.live input {
  padding-left: 8px;
}
.live .drop {
  width: 36px;
  border-left: 2px solid #707070;
}
.chain {
  margin-left: 21px;
}
.sep {
  width: 2px;
  height: 94px;
  background: #4e4e4e;
}
.s1 {
  margin-left: 20px;
}
.scale {
  margin-left: 16px;
}
.scale .row {
  gap: 9px;
}
.linkbtn {
  width: 44px;
  height: 44px;
  margin-left: 12px;
  border-radius: 4px;
  background: #2f2f2f;
  justify-content: center;
}
.skew {
  margin-left: 20px;
}
.skew .row {
  gap: 12px;
}
.s2 {
  margin-left: 10px;
}
.icons {
  display: grid;
  flex: none;
  grid-template-rows: 42px 42px;
  row-gap: 10px;
}
.icons button {
  justify-content: center;
}
.rot {
  grid-template-columns: 34px 34px;
  column-gap: 20px;
  margin-left: 17px;
  color: #8c8c8c;
}
.pbox {
  position: relative;
  width: 50px;
  height: 50px;
  margin-left: 22px;
  color: #8c8c8c;
  font: 44px/48px 'Liberation Serif', serif;
  text-align: center;
}
.pbox i {
  position: absolute;
  width: 8px;
  height: 8px;
  border: 2px solid #a0a0a0;
}
.pbox i:nth-child(1) {
  left: 0;
  top: 0;
  border-width: 2px 0 0 2px;
}
.pbox i:nth-child(2) {
  right: 0;
  top: 0;
  border-width: 2px 2px 0 0;
}
.pbox i:nth-child(3) {
  left: 0;
  bottom: 0;
  border-width: 0 0 2px 2px;
}
.pbox i:nth-child(4) {
  right: 0;
  bottom: 0;
  border-width: 0 2px 2px 0;
}
.s3 {
  margin-left: 15px;
}
.trees {
  grid-template-columns: 26px 36px;
  column-gap: 24px;
  margin-left: 20px;
}
.dim {
  color: #8c8c8c;
}
.s4 {
  margin-left: 16px;
}
.paint {
  margin-left: 11px;
}
.paint .row {
  gap: 6px;
}
.swatch {
  width: 40px;
  height: 40px;
}
.none {
  background: linear-gradient(to bottom right, #fff calc(50% - 3px), #f00 calc(50% - 3px), #f00 calc(50% + 3px), #fff calc(50% + 3px));
}
.black {
  border: 12px solid #000;
}
.open {
  width: 34px;
  height: 42px;
  justify-content: center;
  border: 2px solid #707070;
  border-radius: 5px;
  color: #fff;
}
.s5 {
  margin-left: 10px;
}
.stroke {
  margin-left: 11px;
}
.sample {
  flex: 1;
  background: #e2e2e2;
  display: flex;
  align-items: center;
  padding: 0 18px 0 8px;
}
.sample i {
  flex: 1;
  height: 15px;
  background: #000;
}
.s6 {
  margin-left: 10px;
}
.fx {
  margin-left: 16px;
  width: 176px;
}
.trio {
  padding-left: 4px;
  gap: 27px;
}
.fxt {
  font-size: 27px;
  line-height: 28px;
  margin-left: 5px;
}
.fxt i {
  align-self: flex-end;
  border: 3px solid transparent;
  border-top: 4px solid #c4c4c4;
  border-bottom: 0;
}
.opa {
  gap: 14px;
}
.pct {
  width: 140px;
  border-radius: 0 5px 5px 0;
}
.s7 {
  margin-left: 11px;
}
.wrap {
  grid-template-columns: 44px 44px;
  column-gap: 10px;
  margin-left: 12px;
}
.wrap .on {
  height: 44px;
  margin-top: -2px;
  border-radius: 4px;
  background: #2f2f2f;
}
.bolt {
  margin-left: auto;
}
.s8 {
  margin-left: 20px;
}
.end {
  grid-template-columns: 24px;
  margin: 0 4px 0 16px;
}

.body {
  flex: 1;
  min-height: 0;
  display: flex;
}
.tools {
  flex: 0 0 64px;
  overflow: hidden;
  color: #c4c4c4;
}
.dockhead {
  height: 24px;
  background: #424242;
  border-bottom: 2px solid #383838;
  display: flex;
  align-items: center;
  color: #c4c4c4;
}
.dockhead.right {
  justify-content: flex-end;
  padding-right: 2px;
}
.grip {
  width: 38px;
  height: 8px;
  margin: 6px 0 14px 6px;
  background: repeating-linear-gradient(90deg, #3a3a3a 0 2px, transparent 2px 4px);
}
.tgroup {
  padding-bottom: 6px;
  background: linear-gradient(#4d4d4d 0 0) 0 calc(100% - 2px) / 100% 2px no-repeat;
}
.tool {
  width: 56px;
  height: 48px;
}
.tool.on {
  background: #2f2f2f;
  background-clip: content-box;
  padding: 2px 2px 2px 0;
}
.tool.on svg {
  margin-right: -2px;
}
.swaprow {
  display: flex;
  align-items: flex-end;
  height: 32px;
  gap: 14px;
}
.swaprow svg:first-child {
  margin-bottom: 5px;
}
.fillstroke {
  position: relative;
  height: 58px;
  margin-top: 7px;
}
.fillbox,
.strokebox {
  position: absolute;
}
.fillbox {
  left: 0;
  top: 0;
  width: 36px;
  height: 39px;
  background: linear-gradient(to bottom right, #fff calc(50% - 3px), #e00 calc(50% - 3px), #e00 calc(50% + 3px), #fff calc(50% + 3px));
}
.strokebox {
  left: 16px;
  top: 19px;
  width: 39px;
  height: 39px;
  border: 11px solid #000;
}
.format {
  display: flex;
  margin-top: 15px;
  gap: 8px;
}
.format button {
  width: 26px;
  height: 24px;
}
.format .on {
  background: #2f2f2f;
  border-radius: 0 4px 4px 0;
  padding-left: 4px;
}
.format i {
  width: 16px;
  height: 16px;
  border: 2px solid #c4c4c4;
}
.format .t {
  font: 700 24px/24px 'Liberation Serif', serif;
  width: 20px;
  justify-content: center;
}
.applybox {
  margin-top: 14px;
  width: 54px;
  height: 44px;
  padding: 6px 0 0 9px;
  background: #2f2f2f;
  border-radius: 0 4px 0 0;
}
.applybox span {
  display: block;
  width: 32px;
  height: 32px;
  border: 2px solid #999;
  background: linear-gradient(to bottom right, #fff 46%, #e00 46%, #e00 54%, #fff 54%);
}
.gutter {
  width: 6px;
  border: 2px solid #383838;
  border-width: 0 2px;
  background: #4b4b4b;
}

.doc {
  flex: 1;
  min-width: 0;
  display: flex;
  flex-direction: column;
}
.tabs {
  flex: 0 0 58px;
  display: flex;
  background: #424242;
  border-bottom: 2px solid #383838;
}
.tab {
  width: 514px;
  display: flex;
  align-items: center;
  padding-left: 28px;
  gap: 16px;
  background: #535353;
  border-right: 2px solid #383838;
  font-weight: 600;
  font-size: 22px;
  color: #f0f0f0;
  white-space: nowrap;
}
.x {
  font-size: 28px;
  line-height: 20px;
}
.work {
  flex: 1;
  min-height: 0;
  display: flex;
}
.sheet {
  flex: 1;
  min-width: 0;
  display: flex;
  flex-direction: column;
}
.hrow {
  flex: 0 0 32px;
  display: flex;
  background: #1f1f1f;
  border-bottom: 2px solid #8a8a8a;
}
.origin {
  flex: 0 0 32px;
  border-right: 2px solid #8a8a8a;
  background:
    repeating-linear-gradient(90deg, #8a8a8a 0 2px, transparent 2px 4px) 0 8px / 100% 2px no-repeat,
    repeating-linear-gradient(#8a8a8a 0 2px, transparent 2px 4px) 8px 0 / 2px 100% no-repeat;
}
.hruler {
  flex: 1;
  min-width: 0;
  overflow: hidden;
}
.sheet text {
  fill: #fff;
  font-size: 20px;
  font-weight: 600;
}
.vrow {
  flex: 1;
  min-height: 0;
  display: flex;
}
.vruler {
  height: 100%;
  box-sizing: content-box;
  background: #1f1f1f;
  border-right: 2px solid #8a8a8a;
  overflow: hidden;
}
.canvas {
  flex: 1;
  min-width: 0;
  position: relative;
  background: #000;
  overflow: hidden;
}
.art {
  position: absolute;
  left: 714px;
  top: 430px;
}
.vscroll {
  flex: 0 0 30px;
  display: flex;
  flex-direction: column;
  align-items: center;
  justify-content: space-between;
  padding: 8px 0 10px;
  background: #4b4b4b;
  color: #8f8f8f;
}
.vscroll i {
  width: 28px;
  height: 50px;
  border-radius: 14px;
  margin-bottom: 62px;
  background: #6a6a6a;
}
.status {
  flex: 0 0 26px;
  height: 26px;
  display: flex;
  align-items: flex-start;
  overflow: hidden;
}
.pager {
  display: flex;
  color: #8a8a8a;
  padding-left: 24px;
}
.pager svg {
  margin-top: 9px;
}
.p1 {
  margin-left: 28px;
}
.pagebox {
  width: 178px;
  height: 32px;
  margin: 1px 28px 0;
  display: flex;
  border: 2px solid #707070;
  border-radius: 5px;
  background: #444;
  color: #fff;
}
.pagebox input {
  flex: 1;
  width: 0;
  padding-left: 7px;
  font-weight: 500;
}
.pagebox button {
  width: 36px;
  align-items: flex-start;
  justify-content: center;
  border-left: 2px solid #707070;
}
.p3 {
  margin-left: 28px;
}
.pf {
  margin: 4px 0 0 35px;
}
.profile,
.errors {
  height: 32px;
  font-weight: 500;
  white-space: nowrap;
}
.profile {
  width: 220px;
  margin-left: 27px;
  justify-content: space-between;
  font-size: 21px;
}
.errors {
  width: 193px;
  margin: 0 10px 0 32px;
}
.errors i {
  width: 22px;
  height: 22px;
  margin-right: 9px;
  border-radius: 50%;
  background: #4caf50;
}
.errors svg {
  margin-left: auto;
}
.hscroll {
  flex: 1;
  height: 34px;
  display: flex;
  align-items: center;
  justify-content: space-between;
  padding: 0 12px;
  background: #4b4b4b;
  color: #a0a0a0;
}
.hscroll i {
  width: 50px;
  height: 28px;
  margin-left: 14px;
  border-radius: 14px;
  background: #6a6a6a;
}
.sp {
  margin: 6px 0 0 10px;
}
.sz {
  margin: 9px 2px 0 16px;
  color: #757575;
}

.dock {
  flex: 0 0 318px;
  color: #c4c4c4;
}
.pgroup {
  padding: 6px 0 4px;
  border-bottom: 2px solid #383838;
}
.pgroup .grip {
  margin: 0 0 6px 144px;
}
.panel {
  width: 100%;
  height: 56px;
  padding-left: 10px;
  text-align: left;
}
.panel span {
  color: #f4f4f4;
  font-size: 23px;
  line-height: 30px;
  font-weight: 600;
  white-space: nowrap;
}
</style>
